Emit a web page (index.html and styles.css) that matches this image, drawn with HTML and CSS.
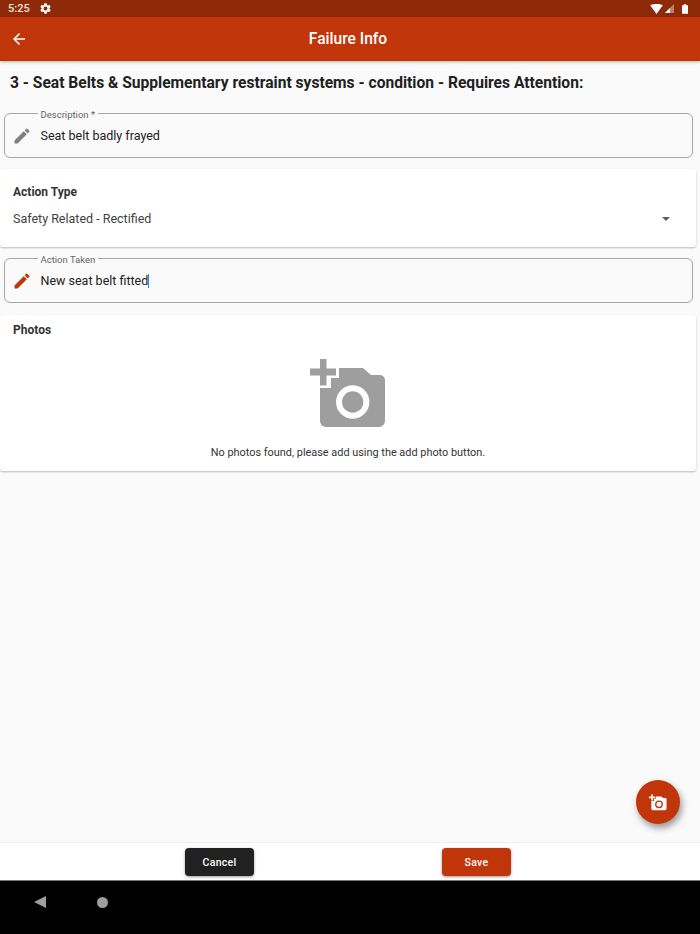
FILE: index.html
```html
<!DOCTYPE html>
<html lang="en">
<head>
    <meta charset="UTF-8">
    <meta name="viewport" content="width=device-width, initial-scale=1.0">
    <title>Failure Info</title>
    <link rel="stylesheet" href="styles.css">
</head>
<body>

<div class="status-bar">
    <span class="status-time">5:25</span>
    <svg class="status-gear" viewBox="0 0 24 24"><path d="M19.14 12.94c.04-.3.06-.61.06-.94s-.02-.64-.07-.94l2.03-1.58a.49.49 0 0 0 .12-.61l-1.92-3.32a.49.49 0 0 0-.59-.22l-2.39.96a7 7 0 0 0-1.62-.94l-.36-2.54a.48.48 0 0 0-.48-.41h-3.84a.47.47 0 0 0-.47.41l-.36 2.54c-.59.24-1.13.57-1.62.94l-2.39-.96a.48.48 0 0 0-.59.22L2.74 8.87a.47.47 0 0 0 .12.61l2.03 1.58c-.05.3-.09.63-.09.94s.02.64.07.94l-2.03 1.58a.49.49 0 0 0-.12.61l1.92 3.32c.12.22.37.29.59.22l2.39-.96c.5.38 1.03.7 1.62.94l.36 2.54c.05.24.24.41.48.41h3.84c.24 0 .44-.17.47-.41l.36-2.54a7 7 0 0 0 1.62-.94l2.39.96c.22.08.47 0 .59-.22l1.92-3.32a.47.47 0 0 0-.12-.61l-2.01-1.58zM12 15.6A3.6 3.6 0 1 1 12 8.4a3.6 3.6 0 0 1 0 7.2z"/></svg>
    <div class="status-right">
        <svg class="status-wifi" viewBox="0 0 14 11"><path d="M0 1.5C4-.5 10-.5 14 1.5L7 11z"/></svg>
        <svg class="status-signal" viewBox="0 0 10 10"><path d="M10 0v10H0z" opacity=".4"/><path d="M5.500 4.500V10H0z"/></svg>
        <svg class="status-battery" viewBox="0 0 7 11"><path d="M2 0h3v1h1.500a.5.5 0 0 1 .5.500V11H0V1.500A.5.5 0 0 1 .5 1H2z"/></svg>
    </div>
</div>

<header class="app-bar">
    <svg class="back-icon" viewBox="0 0 24 24"><path d="M20 11H7.830l5.590-5.590L12 4l-8 8 8 8 1.410-1.410L7.830 13H20z"/></svg>
    <h1>Failure Info</h1>
</header>

<main class="content">
    <h2 class="section-title">3 - Seat Belts &amp; Supplementary restraint systems - condition - Requires Attention:</h2>

    <fieldset class="field">
        <legend>Description *</legend>
        <svg class="pencil" viewBox="0 0 24 24"><path d="M3 17.250V21h3.750L17.810 9.940l-3.750-3.750L3 17.250zM20.710 7.040a1 1 0 0 0 0-1.410l-2.340-2.340a1 1 0 0 0-1.410 0l-1.830 1.830 3.750 3.750 1.830-1.830z"/></svg>
        <span class="field-value">Seat belt badly frayed</span>
    </fieldset>

    <section class="card action-card">
        <div class="card-label">Action Type</div>
        <div class="select-row">
            <span>Safety Related - Rectified</span>
            <span class="select-arrow"></span>
        </div>
    </section>

    <fieldset class="field">
        <legend>Action Taken</legend>
        <svg class="pencil pencil-active" viewBox="0 0 24 24"><path d="M3 17.250V21h3.750L17.810 9.940l-3.750-3.750L3 17.250zM20.710 7.040a1 1 0 0 0 0-1.410l-2.340-2.340a1 1 0 0 0-1.410 0l-1.830 1.830 3.750 3.750 1.830-1.830z"/></svg>
        <span class="field-value">New seat belt fitted</span><span class="caret"></span>
    </fieldset>

    <section class="card photos-card">
        <div class="card-label">Photos</div>
        <svg class="photo-placeholder" viewBox="0 0 77 70"><path d="M10 0h6.500v9.500H26v7h-9.500v10H10v-10H0v-7h10z"/><path d="M10 29h11V19h8V9h24l8 7h9a5 5 0 0 1 5 5v41a6 6 0 0 1-6 6H16a6 6 0 0 1-6-6z"/><circle class="photo-ring" cx="42.700" cy="43" r="16.700"/><circle cx="42.700" cy="43" r="10.700"/></svg>
        <p class="empty-text">No photos found, please add using the add photo button.</p>
    </section>
</main>

<button class="fab" type="button">
    <svg viewBox="0 0 77 70"><path d="M10 0h6.500v9.500H26v7h-9.500v10H10v-10H0v-7h10z"/><path d="M10 29h11V19h8V9h24l8 7h9a5 5 0 0 1 5 5v41a6 6 0 0 1-6 6H16a6 6 0 0 1-6-6z"/><circle class="fab-ring" cx="42.700" cy="43" r="16.700"/><circle cx="42.700" cy="43" r="10.700"/></svg>
</button>

<footer class="actions">
    <button class="button button-dark" type="button">Cancel</button>
    <button class="button button-primary" type="button">Save</button>
</footer>

<nav class="nav-bar">
    <span class="nav-back"></span>
    <span class="nav-home"></span>
</nav>

</body>
</html>
```

FILE: styles.css
```css
* {
    box-sizing: border-box;
}
body {
    margin: 0;
    height: 934px;
    display: flex;
    flex-direction: column;
    position: relative;
    overflow: hidden;
    font-family: Roboto, "Liberation Sans", sans-serif;
    background-color: #fafafa;
    color: #212121;
}
.status-bar {
    height: 17px;
    flex: none;
    display: flex;
    align-items: center;
    padding: 0 9px 0 8px;
    background-color: #8f2a09;
    color: #f3e3dc;
}
.status-time {
    font-size: 11px;
    font-weight: 500;
}
.status-gear {
    width: 13px;
    height: 13px;
    margin-left: 9px;
    fill: #fff;
}
.status-right {
    margin-left: auto;
    display: flex;
    align-items: center;
    gap: 2px;
    margin-right: 3px;
}
.status-wifi {
    width: 13px;
    height: 10px;
    fill: #fff;
}
.status-signal {
    width: 9px;
    height: 9px;
    margin-right: 6px;
    fill: #fff;
}
.status-battery {
    width: 6px;
    height: 10px;
    fill: #fff;
}
.app-bar {
    height: 44px;
    flex: none;
    display: flex;
    align-items: center;
    justify-content: center;
    padding-right: 4px;
    position: relative;
    z-index: 1;
    background-color: #c1350b;
    box-shadow: 0 1px 3px rgba(0, 0, 0, 0.3);
}
.app-bar h1 {
    margin: 0;
    font-size: 15.600px;
    font-weight: 500;
    color: #fff;
}
.back-icon {
    position: absolute;
    left: 10px;
    top: 13px;
    width: 18px;
    height: 18px;
    fill: #fff;
}
.content {
    flex: 1;
    padding: 0 4px 0 0;
}
.section-title {
    margin: 13px 0 13px 10px;
    font-size: 15.600px;
    line-height: 19px;
    font-weight: 700;
    white-space: nowrap;
}
.field {
    height: 52px;
    margin: 0 3px 11px 4px;
    padding: 0 0 5.500px 7px;
    display: flex;
    align-items: center;
    border: 1.500px solid #a6a6a6;
    border-radius: 6px;
}
.field legend {
    margin-left: 25.500px;
    padding: 4px 3px 0;
    font-size: 9.500px;
    line-height: 10px;
    color: #666;
}
.pencil {
    width: 20px;
    height: 20px;
    flex: none;
    fill: #808080;
}
.pencil-active {
    fill: #c1350b;
}
.field-value {
    margin-left: 8.500px;
    font-size: 12.500px;
    color: #212121;
}
.caret {
    width: 1px;
    height: 14px;
    background-color: #3b78e7;
}
.card {
    background: white;
    border-radius: 3px;
    box-shadow: 0 1px 2px rgba(0, 0, 0, 0.25);
    padding: 15px 13px 0;
}
.card-label {
    font-size: 12px;
    line-height: 16px;
    font-weight: 700;
    color: #333;
}
.action-card {
    height: 78px;
    margin-bottom: 4px;
}
.select-row {
    display: flex;
    justify-content: space-between;
    align-items: center;
    margin-top: 11px;
    padding-right: 13px;
    font-size: 12.500px;
    color: #424242;
}
.select-arrow {
    width: 0;
    height: 0;
    border-left: 4px solid transparent;
    border-right: 4px solid transparent;
    border-top: 4px solid #616161;
}
.photos-card {
    height: 156px;
    margin-top: 12px;
    padding-top: 7px;
    text-align: center;
}
.photos-card .card-label {
    text-align: left;
}
.photo-placeholder {
    display: block;
    width: 77px;
    height: 70px;
    margin: 21px auto 0 auto;
    fill: #9e9e9e;
}
.photo-ring {
    fill: #fff;
}
.empty-text {
    margin: 16px 0 0;
    font-size: 10.900px;
    line-height: 15px;
    color: #333;
}
.fab {
    position: absolute;
    left: 636px;
    top: 780px;
    width: 44px;
    height: 44px;
    padding: 13px;
    border: none;
    border-radius: 50%;
    background-color: #c1350b;
    box-shadow: 2px 4px 7px rgba(0, 0, 0, 0.4);
}
.fab svg {
    display: block;
    width: 18px;
    height: 17px;
    fill: #fff;
}
.fab-ring {
    fill: #c1350b;
}
.actions {
    height: 38px;
    flex: none;
    display: flex;
    align-items: flex-start;
    padding: 5px 0 0 185px;
    gap: 188px;
    background: white;
    border-top: 1px solid #efefef;
}
.button {
    width: 69px;
    height: 28px;
    border: none;
    border-radius: 4px;
    font-family: inherit;
    font-size: 10.500px;
    font-weight: 500;
    letter-spacing: 0.3px;
    color: white;
    box-shadow: 0 1px 3px rgba(0, 0, 0, 0.4);
}
.button-dark {
    background-color: #212121;
}
.button-primary {
    background-color: #c1350b;
}
.nav-bar {
    height: 54px;
    flex: none;
    display: flex;
    align-items: center;
    padding: 0 0 11px 34px;
    background-color: black;
    border-top: 1px solid #777;
}
.nav-back {
    width: 0;
    height: 0;
    border-top: 6.500px solid transparent;
    border-bottom: 6.500px solid transparent;
    border-right: 12px solid #9e9e9e;
}
.nav-home {
    width: 11px;
    height: 11px;
    margin-left: 51px;
    border-radius: 50%;
    background-color: #9e9e9e;
}
```
